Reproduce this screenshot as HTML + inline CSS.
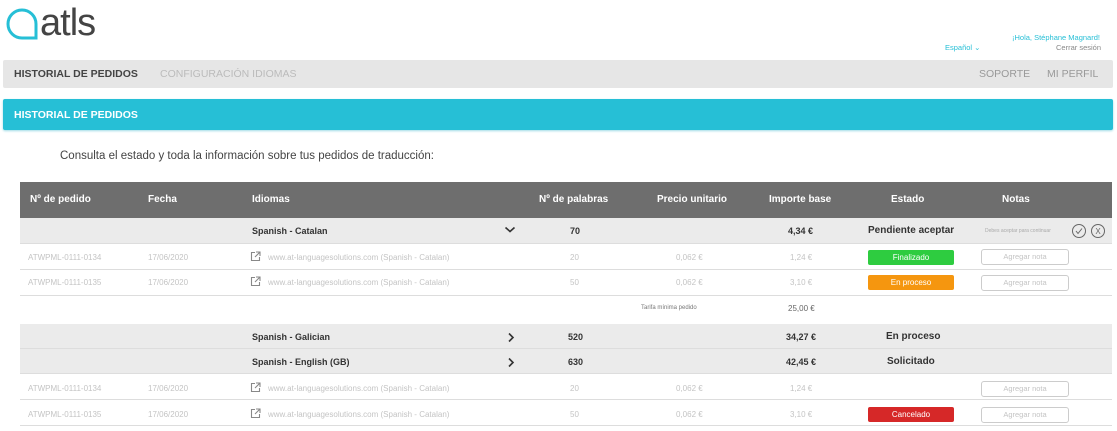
<!DOCTYPE html>
<html><head><meta charset="utf-8"><style>
*{margin:0;padding:0;box-sizing:border-box}
body{width:1117px;height:431px;background:#fff;font-family:"Liberation Sans","DejaVu Sans",sans-serif;position:relative;overflow:hidden;color:#444}
.a{position:absolute;white-space:nowrap}
.nav{left:3px;top:60px;width:1110px;height:28px;background:#e6e6e6;border-radius:2px}
.teal{left:3px;top:99px;width:1110px;height:31px;background:#26bfd6;border-radius:2px;box-shadow:0 1px 2px #9fdbe6}
.row{position:absolute;left:20px;width:1092px}
.g{background:#ebebeb}
.line{border-bottom:1px solid #ddd}
.lt{color:#c4c4c4;font-size:8px}
.bd{font-weight:bold;font-size:9px;color:#333}
.hd{color:#fff;font-weight:bold;font-size:10px}
.badge{position:absolute;width:86px;height:15px;border-radius:2px;color:#fff;font-size:8px;text-align:center;line-height:15px;left:868px}
.btn{position:absolute;left:981px;width:88px;height:16px;border:1px solid #ccc;border-radius:3px;color:#c4c4c4;font-size:7.5px;text-align:center;line-height:14px}
.ic{position:absolute;left:250px}
</style></head><body>
<svg class="a" style="left:5px;top:7px" width="34" height="34" viewBox="0 0 34 34"><path d="M17 3a14 14 0 1 0 0 28h14V17A14 14 0 0 0 17 3z" fill="none" stroke="#26bfd6" stroke-width="3"/></svg>
<div class="a" style="left:40px;top:2px;font-size:38px;color:#444;letter-spacing:-1px">atls</div>
<div class="a" style="left:1012px;top:33px;font-size:7.5px;color:#26bfd6">¡Hola, Stéphane Magnard!</div>
<div class="a" style="left:945px;top:43px;font-size:7.5px;color:#26bfd6">Español ⌄</div>
<div class="a" style="left:1056px;top:43px;font-size:7.5px;color:#888">Cerrar sesión</div>
<div class="a nav"></div>
<div class="a" style="left:14px;top:68px;font-size:10.5px;font-weight:bold;color:#444">HISTORIAL DE PEDIDOS</div>
<div class="a" style="left:160px;top:68px;font-size:10.5px;color:#bbb">CONFIGURACIÓN IDIOMAS</div>
<div class="a" style="left:979px;top:68px;font-size:10.5px;color:#999">SOPORTE</div>
<div class="a" style="left:1047px;top:68px;font-size:10.5px;color:#999">MI PERFIL</div>
<div class="a teal"></div>
<div class="a" style="left:14px;top:109px;font-size:10.5px;font-weight:bold;color:#fff">HISTORIAL DE PEDIDOS</div>
<div class="a" style="left:60px;top:150px;font-size:11.5px;color:#444">Consulta el estado y toda la información sobre tus pedidos de traducción:</div>

<div class="row" style="top:182px;height:36px;background:#6e6e6e"></div>
<div class="a hd" style="left:30px;top:194px">Nº de pedido</div>
<div class="a hd" style="left:148px;top:194px">Fecha</div>
<div class="a hd" style="left:252px;top:194px">Idiomas</div>
<div class="a hd" style="left:539px;top:194px">Nº de palabras</div>
<div class="a hd" style="left:657px;top:194px">Precio unitario</div>
<div class="a hd" style="left:769px;top:194px">Importe base</div>
<div class="a hd" style="left:891px;top:194px">Estado</div>
<div class="a hd" style="left:1002px;top:194px">Notas</div>

<div class="row g line" style="top:218px;height:26px"></div>
<div class="a bd" style="left:252px;top:226px">Spanish - Catalan</div>
<svg class="a" style="left:504px;top:226px" width="12" height="8"><path d="M1.5 1.5l4.5 4 4.5-4" fill="none" stroke="#333" stroke-width="1.6"/></svg>
<div class="a bd" style="left:570px;top:226px">70</div>
<div class="a bd" style="left:788px;top:226px">4,34 €</div>
<div class="a bd" style="left:868px;top:225px;font-size:10px">Pendiente aceptar</div>
<div class="a" style="left:985px;top:228px;font-size:5px;color:#aaa">Debes aceptar para continuar</div>
<svg class="a" style="left:1071px;top:223px" width="36" height="16"><circle cx="8" cy="8" r="6.5" fill="none" stroke="#666"/><path d="M5 8l2 2.5 4-5" fill="none" stroke="#666"/><circle cx="27" cy="8" r="6.5" fill="none" stroke="#666"/><text x="27" y="11" font-size="8" text-anchor="middle" fill="#666" font-family="Liberation Sans">X</text></svg>

<div class="row line" style="top:244px;height:26px"></div>
<div class="row line" style="top:270px;height:26px"></div>
<div class="row g line" style="top:324px;height:25px"></div>
<div class="row g line" style="top:349px;height:25px"></div>
<div class="row line" style="top:374px;height:26px"></div>
<div class="row line" style="top:400px;height:26px"></div>

<svg class="ic" style="top:251px" width="11" height="11"><path d="M5 1.5H1.5v8h8V6M6 1h4v4M10 1L5 6" fill="none" stroke="#888" stroke-width="1.1"/></svg>
<svg class="ic" style="top:276px" width="11" height="11"><path d="M5 1.5H1.5v8h8V6M6 1h4v4M10 1L5 6" fill="none" stroke="#888" stroke-width="1.1"/></svg>
<svg class="ic" style="top:382px" width="11" height="11"><path d="M5 1.5H1.5v8h8V6M6 1h4v4M10 1L5 6" fill="none" stroke="#888" stroke-width="1.1"/></svg>
<svg class="ic" style="top:408px" width="11" height="11"><path d="M5 1.5H1.5v8h8V6M6 1h4v4M10 1L5 6" fill="none" stroke="#888" stroke-width="1.1"/></svg>

<div class="a lt" style="left:28px;top:253px">ATWPML-0111-0134</div><div class="a lt" style="left:148px;top:253px">17/06/2020</div>
<div class="a lt" style="left:268px;top:253px">www.at-languagesolutions.com (Spanish - Catalan)</div>
<div class="a lt" style="left:570px;top:253px">20</div><div class="a lt" style="left:676px;top:253px">0,062 €</div><div class="a lt" style="left:790px;top:253px">1,24 €</div>
<div class="badge" style="top:250px;background:#2ecc40">Finalizado</div><div class="btn" style="top:249px">Agregar nota</div>

<div class="a lt" style="left:28px;top:278px">ATWPML-0111-0135</div><div class="a lt" style="left:148px;top:278px">17/06/2020</div>
<div class="a lt" style="left:268px;top:278px">www.at-languagesolutions.com (Spanish - Catalan)</div>
<div class="a lt" style="left:570px;top:278px">50</div><div class="a lt" style="left:676px;top:278px">0,062 €</div><div class="a lt" style="left:790px;top:278px">3,10 €</div>
<div class="badge" style="top:275px;background:#f5960f">En proceso</div><div class="btn" style="top:275px">Agregar nota</div>

<div class="a" style="left:641px;top:305px;font-size:6px;color:#777">Tarifa mínima pedido</div>
<div class="a" style="left:788px;top:304px;font-size:8px;color:#666">25,00 €</div>

<div class="a bd" style="left:252px;top:332px">Spanish - Galician</div>
<svg class="a" style="left:507px;top:332px" width="8" height="11"><path d="M2 1.5l4 4-4 4" fill="none" stroke="#333" stroke-width="1.6"/></svg>
<div class="a bd" style="left:568px;top:332px">520</div><div class="a bd" style="left:786px;top:332px">34,27 €</div>
<div class="a bd" style="left:886px;top:331px;font-size:10px">En proceso</div>

<div class="a bd" style="left:252px;top:357px">Spanish - English (GB)</div>
<svg class="a" style="left:507px;top:357px" width="8" height="11"><path d="M2 1.5l4 4-4 4" fill="none" stroke="#333" stroke-width="1.6"/></svg>
<div class="a bd" style="left:568px;top:357px">630</div><div class="a bd" style="left:786px;top:357px">42,45 €</div>
<div class="a bd" style="left:887px;top:356px;font-size:10px">Solicitado</div>

<div class="a lt" style="left:28px;top:384px">ATWPML-0111-0134</div><div class="a lt" style="left:148px;top:384px">17/06/2020</div>
<div class="a lt" style="left:268px;top:384px">www.at-languagesolutions.com (Spanish - Catalan)</div>
<div class="a lt" style="left:570px;top:384px">20</div><div class="a lt" style="left:676px;top:384px">0,062 €</div><div class="a lt" style="left:790px;top:384px">1,24 €</div>
<div class="btn" style="top:381px">Agregar nota</div>

<div class="a lt" style="left:28px;top:410px">ATWPML-0111-0135</div><div class="a lt" style="left:148px;top:410px">17/06/2020</div>
<div class="a lt" style="left:268px;top:410px">www.at-languagesolutions.com (Spanish - Catalan)</div>
<div class="a lt" style="left:570px;top:410px">50</div><div class="a lt" style="left:676px;top:410px">0,062 €</div><div class="a lt" style="left:790px;top:410px">3,10 €</div>
<div class="badge" style="top:407px;background:#d62828">Cancelado</div><div class="btn" style="top:407px">Agregar nota</div>
</body></html>
